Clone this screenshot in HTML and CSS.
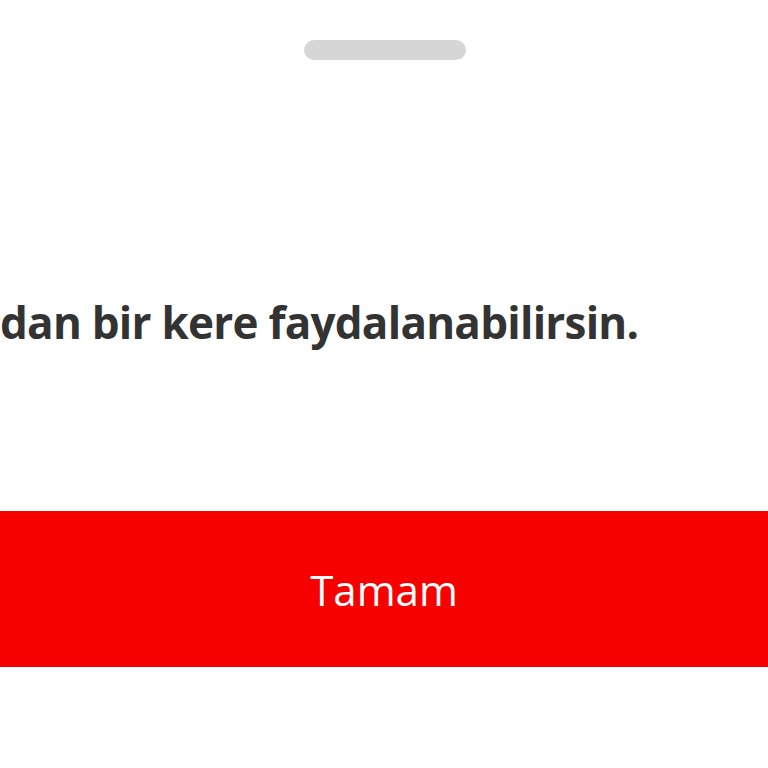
FILE: index.html
```html
<!DOCTYPE html>
<html lang="tr">
<head>
<meta charset="utf-8">
<link rel="stylesheet" href="styles.css">
</head>
<body>
<div class="sheet">
  <div class="handle"></div>
  <p class="message">dan bir kere faydalanabilirsin.</p>
  <button class="cta">Tamam</button>
</div>
</body>
</html>
```
FILE: styles.css
```css
html, body {
  margin: 0;
  padding: 0;
  background: #ffffff;
  width: 768px;
  height: 768px;
  overflow: hidden;
}
.sheet {
  display: flex;
  flex-direction: column;
  align-items: stretch;
}
.handle {
  align-self: center;
  width: 162px;
  height: 20px;
  border-radius: 10px;
  background: #d6d6d6;
  margin-top: 40px;
  margin-left: 2px;
}
.message {
  margin: 0;
  margin-top: 232px;
  height: 60px;
  font-family: "Open Sans", sans-serif;
  font-weight: 700;
  font-size: 44px;
  line-height: 60px;
  color: #333333;
  white-space: nowrap;
  letter-spacing: -0.75px;
}
.cta {
  margin-top: 159px;
  height: 156px;
  border: none;
  background: #f70000;
  color: #ffffff;
  font-family: "Open Sans", sans-serif;
  font-size: 42px;
  font-weight: 400;
  padding: 0;
  width: 100%;
}
```
